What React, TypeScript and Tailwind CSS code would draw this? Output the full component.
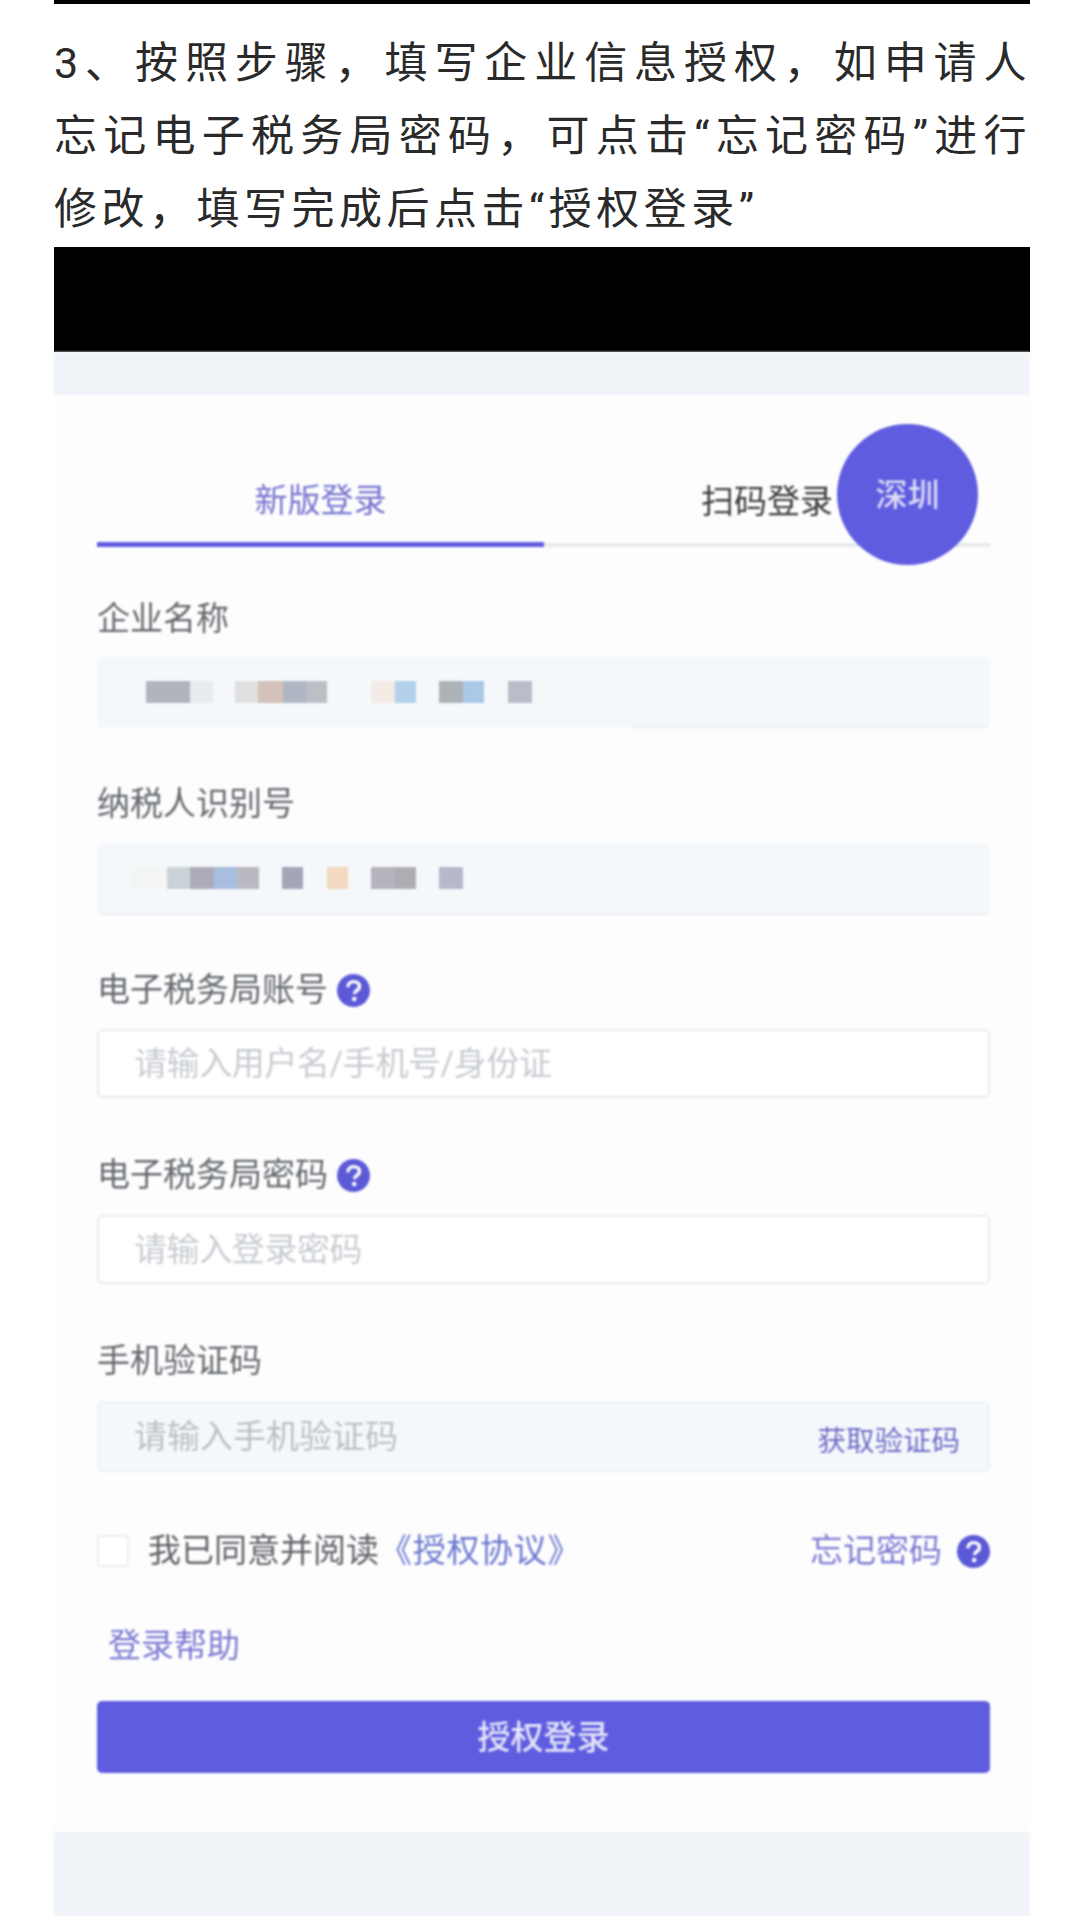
import { FunctionComponent, ReactNode } from "react";

const font = "font-['Roboto','Noto_Sans_CJK_SC',sans-serif]";

const companyTiles = [
  "ml-[49px] w-[44px] bg-[#b0b5bb]",
  "w-[23px] bg-[#e9ecef]",
  "ml-[22px] w-[23px] bg-[#e2dfe0]",
  "w-[25px] bg-[#d4c2bb]",
  "w-[24px] bg-[#b0b6c4]",
  "w-[20px] bg-[#bdbfc5]",
  "ml-[44px] w-[24px] bg-[#f4ebe6]",
  "w-[21px] bg-[#b3d0ec]",
  "ml-[23px] w-[24px] bg-[#adb2b9]",
  "w-[21px] bg-[#abc8e6]",
  "ml-[24px] w-[24px] bg-[#b9bdc8]",
];

const taxTiles = [
  "ml-[33px] w-[37px] bg-[#f4f6f4]",
  "w-[23px] bg-[#c9d3d5]",
  "w-[24px] bg-[#aeabb9]",
  "w-[23px] bg-[#a7bede]",
  "w-[22px] bg-[#bab9c2]",
  "ml-[23px] w-[21px] bg-[#a3a6b6]",
  "ml-[24px] w-[21px] bg-[#f3d9bf]",
  "ml-[23px] w-[24px] bg-[#b5b3bc]",
  "w-[21px] bg-[#aeadb4]",
  "ml-[23px] w-[24px] bg-[#b5b9c9]",
];

const Help: FunctionComponent = () => (
  <svg viewBox="0 0 33 33" className="h-[33px] w-[33px] shrink-0" aria-hidden="true">
    <circle cx="16.5" cy="16.5" r="16.5" fill="#5b59d6" />
    <path
      d="M10.8 13.2c0-3.4 2.5-5.6 5.9-5.6 3.3 0 5.7 1.9 5.7 4.8 0 2.2-1.2 3.3-2.9 4.4-1.4.9-2 1.7-2 3.2"
      fill="none"
      stroke="#fff"
      strokeWidth="3.4"
    />
    <circle cx="17.2" cy="25" r="2.3" fill="#fff" />
  </svg>
);

const Label: FunctionComponent<{ text: string; help?: boolean; className: string }> = ({
  text,
  help,
  className,
}) => (
  <div className={`flex h-[40px] items-center gap-[9px] text-[33px] text-[#65696d] ${className}`}>
    {text}
    {help && <Help />}
  </div>
);

const FilledInput: FunctionComponent<{ tiles: string[]; className: string; children?: ReactNode }> = ({
  tiles,
  className,
  children,
}) => (
  <div className={`relative flex items-center rounded-[6px] border-b-2 border-[#e9edf1] bg-[#f5f8fb] ${className}`}>
    {tiles.map((tile) => (
      <span key={tile} className={`h-[22px] ${tile}`} />
    ))}
    {children}
  </div>
);

const TextInput: FunctionComponent<{ placeholder: string; className: string }> = ({
  placeholder,
  className,
}) => (
  <div
    className={`flex items-center rounded-[6px] border-2 border-[#e8ebef] bg-white pl-[35px] text-[33px] tracking-[-0.4px] text-[#c8ccd1] ${className}`}
  >
    {placeholder}
  </div>
);

const App: FunctionComponent = () => {
  return (
    <div className={`h-[1916px] w-[1080px] overflow-hidden bg-white pl-[54px] pr-[50px] ${font}`}>
      <div className="h-[4px] bg-black" />
      <p className="-mr-[1px] h-[243px] pt-[23px] text-justify text-[43px] leading-[73px] tracking-[4.5px] text-[#2a2a2a]">
        3、按照步骤，填写企业信息授权，如申请人忘记电子税务局密码，可点击“忘记密码”进行修改，填写完成后点击“授权登录”
      </p>
      <div className="h-[105px] bg-black" />

      <div className="h-[1564px] bg-[#f0f3f8] pt-[43px] blur-[0.8px]">
        <div className="relative h-[1437px] bg-[#fdfdfe] pl-[43px] pr-[40px] pt-[65px]">
          <div className="flex text-[33px]">
            <div className="flex h-[87px] w-[447px] items-center justify-center border-b-[5px] border-[#5f5ce0] text-[#7674cf]">
              新版登录
            </div>
            <div className="mt-[83px] h-[4px] w-[446px] bg-[#e9eaec]" />
            <div className="-ml-[446px] flex h-[83px] w-[446px] items-center justify-center text-[#3a3b3d]">
              扫码登录
            </div>
          </div>
          <div className="absolute right-[52px] top-[29px] flex h-[141px] w-[141px] items-center justify-center rounded-full bg-[#5f5ce0] text-[32px] font-medium text-[#dcdcf5]">
            深圳
          </div>

          <Label text="企业名称" className="mt-[52px]" />
          <FilledInput tiles={companyTiles} className="mt-[18px] h-[71px]">
            <span className="absolute left-0 top-full h-[4px] w-[534px] bg-[#f9fbfd]" />
          </FilledInput>

          <Label text="纳税人识别号" className="mt-[56px]" />
          <FilledInput tiles={taxTiles} className="mt-[19px] h-[72px]" />

          <Label text="电子税务局账号" help className="mt-[55px]" />
          <TextInput placeholder="请输入用户名/手机号/身份证" className="mt-[19px] h-[69px]" />

          <Label text="电子税务局密码" help className="mt-[57px]" />
          <TextInput placeholder="请输入登录密码" className="mt-[20px] h-[69px]" />

          <Label text="手机验证码" className="mt-[57px] text-[#4d5054]" />
          <div className="mt-[20px] flex h-[71px] items-center justify-between rounded-[6px] border-2 border-[#eef1f5] bg-[#f5f8fb] pl-[35px] pr-[28px]">
            <span className="text-[33px] text-[#bcc0c6]">请输入手机验证码</span>
            <span className="mt-[12px] text-[28.5px] text-[#6d6cc8]">获取验证码</span>
          </div>

          <div className="mt-[63px] flex h-[32px] items-center justify-between text-[33px]">
            <div className="flex items-center">
              <span className="h-[32px] w-[32px] rounded-[3px] border-2 border-[#eceef1] bg-white" />
              <span className="ml-[19px] text-[#5f6266]">我已同意并阅读</span>
              <span className="tracking-[0.7px] text-[#6c78cf]">《授权协议》</span>
            </div>
            <div className="flex items-center gap-[15px] text-[#7c7bd2]">
              忘记密码
              <Help />
            </div>
          </div>

          <div className="mt-[59px] flex h-[40px] items-center pl-[11px] text-[33px] text-[#7c7bd2]">登录帮助</div>

          <div className="mt-[35px] flex h-[72px] items-center justify-center rounded-[5px] bg-[#5f5ce0] pt-[2px] text-[33px] font-medium text-[#e6e6f8]">
            授权登录
          </div>
        </div>
      </div>
    </div>
  );
};

export default App;
